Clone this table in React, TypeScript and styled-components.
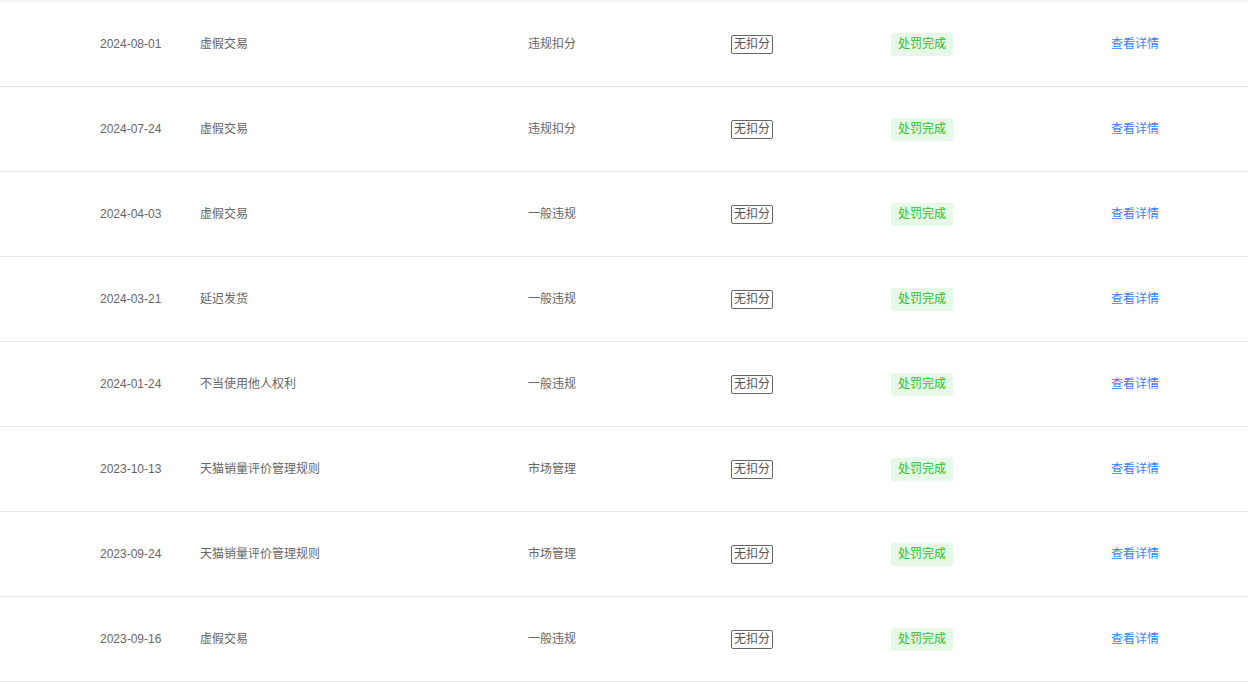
import React from "react";
import styled, { createGlobalStyle } from "styled-components";

const Global = createGlobalStyle`
  html, body { margin: 0; padding: 0; background: #fff; }
  body { font-family: "Liberation Sans", "Noto Sans CJK SC", Arial, sans-serif; }
`;

const Page = styled.div`
  width: 1248px;
  border-top: 2px solid #f5f5f5;
  background: #fff;
`;

const Row = styled.div`
  display: grid;
  grid-template-columns: 100px 100px 328px 203px 160px 220px 1fr;
  align-items: center;
  height: 84px;
  border-bottom: 1px solid #e8e8e8;
  font-size: 12px;
  color: #666;
`;

const Cell = styled.div`
  white-space: nowrap;
  display: flex;
  align-items: center;
`;

const Plain = styled.span`
  display: inline-block;
  font-size: 12px;
  line-height: 17px;
  color: #666;
`;

const Boxed = styled.span`
  display: inline-block;
  border: 1px solid #666;
  border-radius: 2px;
  padding: 0 2px;
  font-size: 12px;
  line-height: 17px;
  color: #555;
`;

const Tag = styled.span`
  display: inline-block;
  background: #e6f8e6;
  color: #28c12e;
  border-radius: 3px;
  padding: 3px 7px;
  font-size: 12px;
  line-height: 17px;
`;

const Link = styled.a`
  display: inline-block;
  color: #3a7dff;
  font-size: 12px;
  line-height: 17px;
  text-decoration: none;
  cursor: pointer;
`;

const rows = [
  ["2024-08-01", "虚假交易", "违规扣分"],
  ["2024-07-24", "虚假交易", "违规扣分"],
  ["2024-04-03", "虚假交易", "一般违规"],
  ["2024-03-21", "延迟发货", "一般违规"],
  ["2024-01-24", "不当使用他人权利", "一般违规"],
  ["2023-10-13", "天猫销量评价管理规则", "市场管理"],
  ["2023-09-24", "天猫销量评价管理规则", "市场管理"],
  ["2023-09-16", "虚假交易", "一般违规"],
];

export default function App() {
  return (
    <>
      <Global />
      <Page>
        {rows.map(([date, reason, type]) => (
          <Row key={date}>
            <Cell />
            <Cell><Plain>{date}</Plain></Cell>
            <Cell><Plain>{reason}</Plain></Cell>
            <Cell><Plain>{type}</Plain></Cell>
            <Cell><Boxed>无扣分</Boxed></Cell>
            <Cell><Tag>处罚完成</Tag></Cell>
            <Cell><Link>查看详情</Link></Cell>
          </Row>
        ))}
      </Page>
    </>
  );
}
